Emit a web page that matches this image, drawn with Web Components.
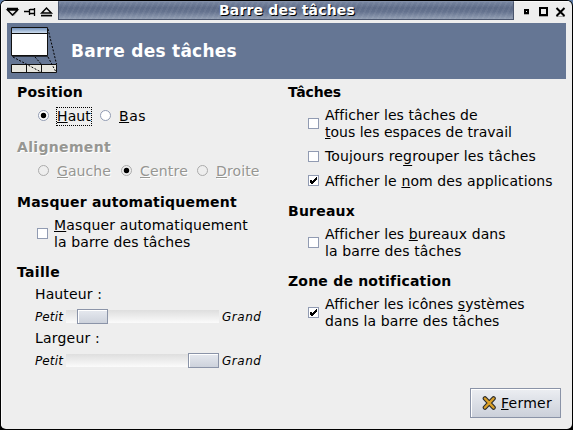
<!DOCTYPE html>
<html lang="fr"><head><meta charset="utf-8"><title>Barre des tâches</title>
<style>html,body{margin:0;width:573px;height:430px;overflow:hidden;background:linear-gradient(#5d7ba5 50%,#000 50%);font:14px/17px "DejaVu Sans",sans-serif;color:#000}</style></head>
<body><panel-window></panel-window>
<script>
const define=(name,css,html,init)=>customElements.define(name,class extends HTMLElement{
  connectedCallback(){
    if(this.shadowRoot)return;
    this.attachShadow({mode:'open'}).innerHTML=`<style>*{box-sizing:border-box}:host{box-sizing:border-box}${css}</style>`+html;
    if(init)init(this);
  }});
// Text whose advance is spread over a given width; "_x" marks the mnemonic letter.
define('ui-text',`:host{display:block;white-space:pre;flex:none}u{text-decoration:underline 1px;text-underline-offset:var(--uo,1px);text-decoration-skip-ink:none}`,`<span></span>`,el=>{
  const s=el.shadowRoot.querySelector('span'),t=el.getAttribute('t'),w=+el.getAttribute('w');
  s.innerHTML=t.replace(/_(.)/,'<u>$1</u>');
  const n=t.replace('_','').length;
  s.style.letterSpacing=(w-s.getBoundingClientRect().width)/n+'px';
  el.style.width=w+'px';
});
define('ui-heading',`:host{display:block;height:17px;font-weight:bold}:host([off]){color:#969692;text-shadow:1px 1px #fff}`,`<slot></slot>`);
define('ui-radio',`:host{display:flex;height:17px;flex:none;align-items:flex-start}svg{flex:none;margin:2px 8px 0 0}.l{margin:0;position:relative}:host([focus]) .l:after{content:"";position:absolute;inset:-1px -1px -1px -1px;border:1px dotted #000}:host([off]){color:#969692;text-shadow:1px 1px #fff}circle.d{display:none}:host([on]) .d{display:block}:host([off]) .r{stroke:#aaa;fill:#eee}`,
`<svg width="12" height="12"><circle class="r" cx="6.5" cy="5.500" r="5" fill="#fff" stroke="#919bb2"/><circle class="d" cx="6.5" cy="5.500" r="2.7" fill="#000"/></svg><div class="l"><slot></slot></div>`);
define('ui-check',`:host{display:flex;align-items:center;flex:none}i{width:11px;height:11px;border:1px solid #919bb2;background:#fff;margin:0 6px var(--mb,1px) 0;flex:none;display:block}svg{display:none}:host([on]) svg{display:block}`,
`<i><svg width="9" height="9" shape-rendering="crispEdges"><path d="M7 1h1v3h-1v1h-1v1h-1v1h-1v1h-2v-1h-1v-3h2v1h1v-1h1v-1h1v-1h1z"/></svg></i><div><slot></slot></div>`);
define('ui-slider',`:host{display:flex;height:16px;font-size:12px;line-height:16px;font-style:italic;flex:none}.t{width:153px;margin:0 3px 0 3px;flex:none;background:linear-gradient(#dedede,#fbfbfb) 0 1px/153px 13px no-repeat;padding-left:var(--pos);height:15px}.k{width:31px;height:15px;border:1px solid #8b94a8;background:linear-gradient(#e6e9ef,#cdd2dc);box-shadow:inset 1px 1px #fff}`,
`<ui-text t="Petit" w="28"></ui-text><div class="t"><div class="k"></div></div><ui-text t="Grand" w="39.5"></ui-text>`);
define('ui-button',`:host{display:flex;width:91px;height:30px;border:1px solid #8a93a7;background:linear-gradient(#eceef2,#cbd0da);box-shadow:inset 1px 1px #fff;padding:6px 0 0 11px}svg{margin:0 4px 0 0;flex:none}`,
`<svg width="15" height="16"><path d="M3 3.500L11.500 12.500M11.500 3.500L3 12.500" stroke="#2b2b2b" stroke-width="4.6" stroke-linecap="round"/><path d="M3 3.500L11.500 12.500M11.500 3.500L3 12.500" stroke="#dba028" stroke-width="2.500" stroke-linecap="round"/></svg><slot></slot>`);
define('title-bar',`:host{display:flex;height:22px;flex:none}.m{width:456px;height:19px;border:1px solid #4a556d;border-top-color:#8390a9;background:repeating-linear-gradient(115deg,rgba(255,255,255,.05) 0 2px,transparent 2px 5px),linear-gradient(#76849f 0,#5d6b87 35%,#65738f 58%,#939fb4 100%);padding:0 0 0 160px;line-height:16px;font-weight:bold;color:#fff;text-shadow:1px 1px #000}svg{display:block;flex:none}`,
`<svg width="57" height="22" fill="none" stroke="#000" stroke-width="1"><g transform="translate(-1 -1)">
<g fill="#777" stroke="none" opacity=".55"><path d="M8 9h10v2l-4 5h-2l-4-5z"/><path d="M41 15h11v2H41z"/></g>
<path d="M7 8.5h11M7.5 10l5 5 5-5z" stroke-width="1.5" fill="#eee"/>
<path d="M24 11.500h5M29.500 9v6M30 9.500h4M30 13.500h4M34.500 8v8" stroke-width="1.3"/>
<path d="M41 15.500h11M41.700 13l4.800-5 4.800 5z" stroke-width="1.5" fill="#eee"/></g></svg>
<div class="m"><ui-text t="Barre des tâches" w="136"></ui-text></div>
<svg width="58" height="22" fill="none" stroke="#000" stroke-width="2"><g transform="translate(-514 -1)"><path d="M524 14.500h5M539 16.500h9M556 16.500h9" stroke="#aaa" stroke-width="1"/><path d="M525 10h3v3h-3z"/><path d="M540 8h7v7h-7z"/><path d="M556.500 8l8 8M564.500 8l-8 8"/></g></svg>`);
define('title-banner',`:host{display:flex;flex:none;height:56px;margin:0 6px;background:#657694;color:#fff;font-weight:bold;font-size:17px;line-height:20px}svg{flex:none;margin-right:14px}ui-text{margin-top:18px}`,
`<svg width="51" height="56" style="margin-right:13px"><defs><linearGradient id="g" x2="0" y2="1"><stop stop-color="#7593bb"/><stop offset="1" stop-color="#cfdeef"/></linearGradient></defs>
<path d="M4.500 4.500h36v28h-36z" fill="#fff" stroke="#111"/><path d="M5 5h35v5H5z" fill="url(#g)"/><path d="M5 10.500h35M5 33.200h36" stroke="#111"/>
<path d="M4.500 41.500h45v8h-45zM19.500 42v7M34.500 42v7" fill="#e7e6df" stroke="#111"/><path d="M6 34L34 49M28 34l7 8M41 34l8 15M41 6l8.500 35" stroke="#000" stroke-dasharray="2 1.500" fill="none"/></svg><ui-text t="Barre des tâches" w="166"></ui-text>`);
const T=(t,w,s='')=>`<ui-text t="${t}" w="${w}" style="${s}"></ui-text>`;
define('panel-window',`:host{display:flex;flex-direction:column;width:573px;height:430px;padding:1px;position:relative;background:#000;border-radius:6px 6px 0 0}
.w{display:flex;flex-direction:column;width:571px;height:428px;background:#eee;border-radius:5px;overflow:hidden;box-shadow:inset 1px 1px #fafafa}
.c{display:flex;height:304px;flex:none}.l{width:271px;padding:5px 0 0 16px}.r{padding:5px 0 0 16px}
.row{display:flex}ui-button{margin:5px 0 0 469px}`,
`<div class="w"><title-bar></title-bar><title-banner></title-banner><div class="c">
<div class="l"><ui-heading>${T('Position',66)}</ui-heading>
<div class="row" style="padding:7px 0 0 20px"><ui-radio on focus>${T('_Haut',34)}</ui-radio><ui-radio style="margin-left:8px">${T('_Bas',27)}</ui-radio></div>
<ui-heading off style="margin-top:14px">${T('Alignement',94)}</ui-heading>
<div class="row" style="padding:7px 0 0 20px"><ui-radio off>${T('_Gauche',54)}</ui-radio><ui-radio off on style="margin-left:9px">${T('_Centre',48)}</ui-radio><ui-radio off style="margin-left:8px">${T('_Droite',43.5)}</ui-radio></div>
<ui-heading style="margin-top:14px">${T('Masquer automatiquement',220)}</ui-heading>
<ui-check style="margin:6px 0 0 20px">${T('_Masquer automatiquement',194)+T('la barre des tâches',136.5)}</ui-check>
<ui-heading style="margin-top:13px">${T('Taille',43)}</ui-heading>
<div style="padding:5px 0 0 18px">${T('Hauteur :',67)}<ui-slider style="--pos:11px;margin-top:6px"></ui-slider><div style="height:5px"></div>${T('Largeur :',65)}<ui-slider style="--pos:122px;margin-top:6px"></ui-slider></div></div>
<div class="r"><ui-heading>${T('Tâches',53)}</ui-heading>
<ui-check style="margin:6px 0 0 20px">${T('Afficher les tâches de',153)+T('_tous les espaces de travail',187)}</ui-check>
<ui-check style="--mb:0px;margin:7px 0 0 20px">${T('Toujours re_grouper les tâches',211,'--uo:4px')}</ui-check>
<ui-check on style="--mb:2px;margin:8px 0 0 20px">${T('Afficher le _nom des applications',228)}</ui-check>
<ui-heading style="margin-top:13px">${T('Bureaux',67)}</ui-heading>
<ui-check style="margin:6px 0 0 20px">${T('Afficher les _bureaux dans',181)+T('la barre des tâches',136.5)}</ui-check>
<ui-heading style="margin-top:13px">${T('Zone de notification',163)}</ui-heading>
<ui-check on style="margin:6px 0 0 20px">${T('Afficher les icônes _systèmes',200)+T('dans la barre des tâches',174.5)}</ui-check></div>
</div><ui-button>${T('_Fermer',51)}</ui-button></div>`);
</script></body></html>
